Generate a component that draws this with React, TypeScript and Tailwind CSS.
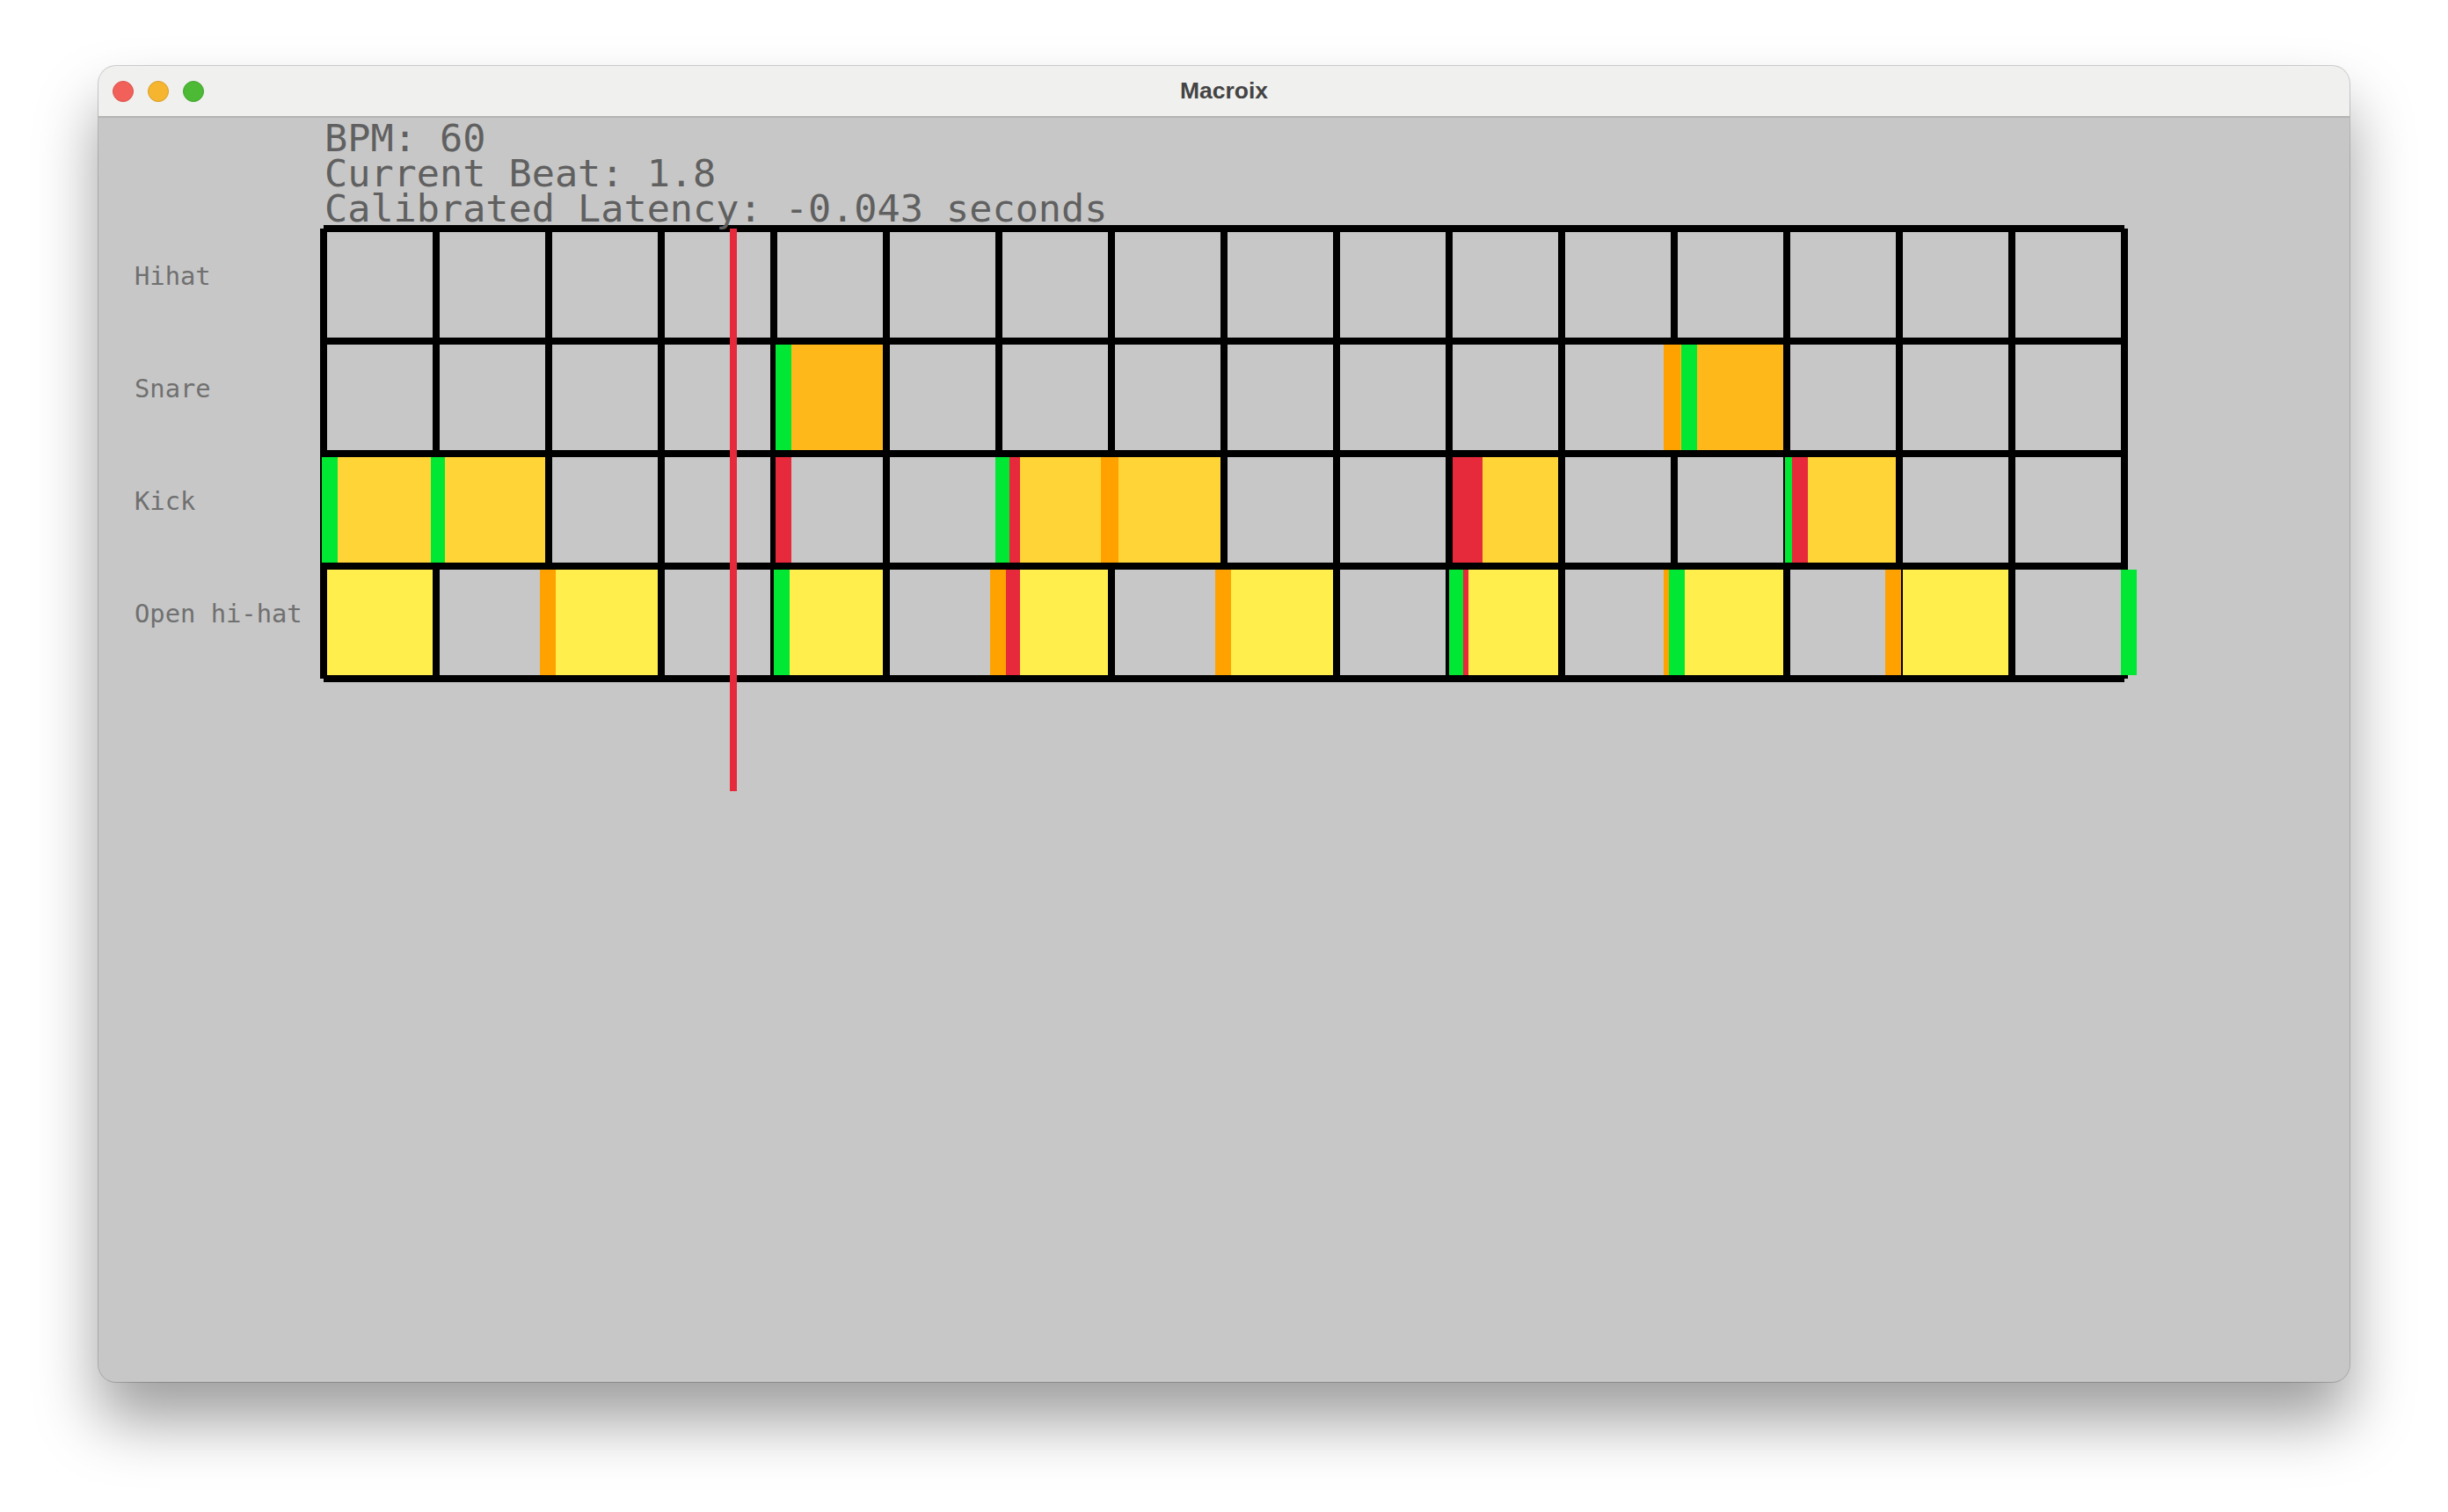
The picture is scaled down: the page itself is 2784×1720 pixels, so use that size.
const COLS = Array.from({ length: 16 }, (_, i) => i);

const FONT = "font-['DejaVu_Sans_Mono',monospace]";

const GREEN = "bg-[#00e833]";
const RED = "bg-[#e6293b]";
const ORANGE = "bg-[#ffa200]";

const LANES = [
  { name: "Hihat", fill: "bg-[#c7c7c7]", cells: [] as number[] },
  { name: "Snare", fill: "bg-[#ffb81a]", cells: [4, 12] },
  { name: "Kick", fill: "bg-[#ffd437]", cells: [0, 1, 6, 7, 10, 13] },
  { name: "Open hi-hat", fill: "bg-[#ffee4b]", cells: [0, 2, 4, 6, 8, 10, 12, 14] },
];

// hit markers, x in window pixels: [lane, from, to, colour]
const HITS: [number, number, number, string][] = [
  [1, 882, 900, GREEN],
  [1, 1892, 1911, ORANGE],
  [1, 1912, 1930, GREEN],
  [2, 366, 384, GREEN],
  [2, 490, 506, GREEN],
  [2, 882, 900, RED],
  [2, 1132, 1148, GREEN],
  [2, 1148, 1160, RED],
  [2, 1252, 1272, ORANGE],
  [2, 1652, 1686, RED],
  [2, 2030, 2038, GREEN],
  [2, 2038, 2056, RED],
  [3, 614, 632, ORANGE],
  [3, 880, 898, GREEN],
  [3, 1126, 1144, ORANGE],
  [3, 1144, 1160, RED],
  [3, 1382, 1400, ORANGE],
  [3, 1648, 1664, GREEN],
  [3, 1664, 1670, RED],
  [3, 1892, 1898, ORANGE],
  [3, 1898, 1916, GREEN],
  [3, 2144, 2162, ORANGE],
  [3, 2412, 2430, GREEN],
];

function TitleBar() {
  return (
    <div className="relative flex h-[59px] items-center justify-center border-b-2 border-[#b4b4b2] bg-[#f0f0ee] pt-[1px]">
      <div className="absolute left-[16px] top-[17px] flex gap-[16px]">
        <span className="h-[24px] w-[24px] rounded-full border border-[#d8534c] bg-[#f1615a]" />
        <span className="h-[24px] w-[24px] rounded-full border border-[#d79d2b] bg-[#f5b52f]" />
        <span className="h-[24px] w-[24px] rounded-full border border-[#43a42e] bg-[#4cba35]" />
      </div>
      <span className="font-['Liberation_Sans',sans-serif] text-[26.5px] font-bold text-[#444444]">Macroix</span>
    </div>
  );
}

function Board() {
  return (
    <div className="relative h-[520px] w-[2056px]">
      <div className="grid grid-cols-[repeat(16,120px)] grid-rows-[repeat(4,120px)] gap-[8px] bg-black p-[8px]">
        {LANES.map((lane) =>
          COLS.map((c) => (
            <div key={lane.name + c} className={lane.cells.includes(c) ? lane.fill : "bg-[#c7c7c7]"} />
          )),
        )}
      </div>

      {/* the drawn lines miss each other at the outer corners */}
      <span className="absolute left-0 top-0 h-[4px] w-[4px] bg-[#c7c7c7]" />
      <span className="absolute right-0 top-0 h-[4px] w-[4px] bg-[#c7c7c7]" />
      <span className="absolute bottom-0 left-0 h-[4px] w-[4px] bg-[#c7c7c7]" />
      <span className="absolute bottom-0 right-0 h-[4px] w-[4px] bg-[#c7c7c7]" />

      {HITS.map(([lane, from, to, color]) => (
        <span
          key={`${lane}-${from}`}
          className={`absolute h-[120px] ${color}`}
          style={{ top: 8 + lane * 128, left: from - 364, width: to - from }}
        />
      ))}

      <span className="absolute left-[466px] top-[4px] h-[640px] w-[8px] bg-[#e6293b]" />
    </div>
  );
}

export default function App() {
  return (
    <div className="min-h-[1720px] w-[2784px] bg-white pl-[112px] pt-[75px]">
      <div className="h-[1497px] w-[2560px] overflow-hidden rounded-[20px] bg-[#c7c7c7] shadow-[0_0_0_1px_rgba(0,0,0,0.18),0_44px_70px_rgba(0,0,0,0.38)]">
        <TitleBar />
        <div className={`relative z-10 h-[122px] pl-[257px] pt-[3px] text-[43.5px] leading-[40px] text-[#606060] ${FONT}`}>
          <div className="h-[40px] whitespace-pre">BPM: 60</div>
          <div className="h-[40px] whitespace-pre">Current Beat: 1.8</div>
          <div className="h-[40px] whitespace-pre">Calibrated Latency: -0.043 seconds</div>
        </div>
        <div className="flex">
          <div className={`w-[252px] pl-[41px] pt-[41px] text-[28.8px] text-[#707070] ${FONT}`}>
            {LANES.map((lane) => (
              <div key={lane.name} className="h-[128px] leading-[34px]">
                {lane.name}
              </div>
            ))}
          </div>
          <Board />
        </div>
      </div>
    </div>
  );
}
